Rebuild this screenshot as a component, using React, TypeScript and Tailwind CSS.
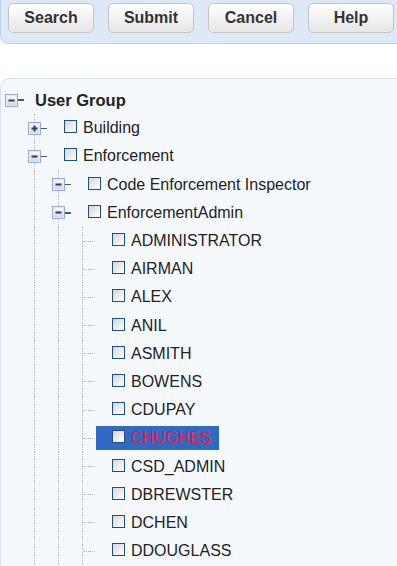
import React from "react";

type Kind = "root" | "open" | "closed" | "leaf";
type Node = { label: string; level: number; kind: Kind; selected?: boolean };

const nodes: Node[] = [
  { label: "User Group", level: 0, kind: "root" },
  { label: "Building", level: 1, kind: "closed" },
  { label: "Enforcement", level: 1, kind: "open" },
  { label: "Code Enforcement Inspector", level: 2, kind: "open" },
  { label: "EnforcementAdmin", level: 2, kind: "open" },
  { label: "ADMINISTRATOR", level: 3, kind: "leaf" },
  { label: "AIRMAN", level: 3, kind: "leaf" },
  { label: "ALEX", level: 3, kind: "leaf" },
  { label: "ANIL", level: 3, kind: "leaf" },
  { label: "ASMITH", level: 3, kind: "leaf" },
  { label: "BOWENS", level: 3, kind: "leaf" },
  { label: "CDUPAY", level: 3, kind: "leaf" },
  { label: "CHUGHES", level: 3, kind: "leaf", selected: true },
  { label: "CSD_ADMIN", level: 3, kind: "leaf" },
  { label: "DBREWSTER", level: 3, kind: "leaf" },
  { label: "DCHEN", level: 3, kind: "leaf" },
  { label: "DDOUGLASS", level: 3, kind: "leaf" },
];

function ExpanderBox({ plus }: { plus: boolean }) {
  return (
    <svg width="13" height="13" viewBox="0 0 13 13" className="block shrink-0">
      <defs>
        <linearGradient id={plus ? "gp" : "gm"} x1="0" y1="0" x2="0" y2="1">
          <stop offset="0" stopColor="#ffffff" />
          <stop offset="1" stopColor="#c6d4ea" />
        </linearGradient>
      </defs>
      <rect x="0.5" y="0.5" width="12" height="12" fill={`url(#${plus ? "gp" : "gm"})`} stroke="#93acd9" />
      <rect x="1.5" y="1.5" width="10" height="10" fill="none" stroke="#e3eaf6" />
      <rect x="3.5" y="5.5" width="6" height="2" fill="#3c3c3c" />
      {plus && <rect x="5.5" y="3.5" width="2" height="6" fill="#3c3c3c" />}
    </svg>
  );
}

function VLine() {
  return <div className="ml-[6px] h-full border-l border-dotted border-[#bdbdbd]" />;
}

function Checkbox() {
  return (
    <div className="mb-[3px] h-[13px] w-[13px] shrink-0 border border-[#1d4f80] bg-gradient-to-br from-[#d6d6d6] to-white" />
  );
}

function Row({ node }: { node: Node }) {
  const { level, kind } = node;
  return (
    <div className={`flex h-[28.2px] items-stretch ${kind === "root" ? "pl-[4px]" : "pl-[3px]"}`}>
      {Array.from({ length: level }).map((_, k) => (
        <div key={k} className="flex w-[24px] shrink-0">
          {k >= 1 && <VLine />}
        </div>
      ))}
      {kind === "leaf" ? (
        <>
          <div className="flex w-[13px] shrink-0 items-center">
            <div className="ml-[6px] self-stretch border-l border-dotted border-[#bdbdbd]" />
            <div className="flex-1 border-t border-dotted border-[#bdbdbd]" />
          </div>
          <div className="flex w-[6px] shrink-0 items-center">
            <div className="w-full border-t border-dotted border-[#bdbdbd]" />
          </div>
        </>
      ) : (
        <>
          <div className="flex w-[13px] shrink-0 flex-col">
            <div className="flex-1">{kind !== "root" && <VLine />}</div>
            <ExpanderBox plus={kind === "closed"} />
            <div className="flex-1">{kind !== "root" && <VLine />}</div>
          </div>
          <div className="flex w-[6px] shrink-0 items-center">
            <div className="h-[1.5px] w-full bg-[#555]" />
          </div>
        </>
      )}
      {kind === "root" ? (
        <div className="ml-[1px] flex items-center pl-[10px] text-[16.5px] font-bold text-[#222]">
          {node.label}
        </div>
      ) : (
        <div className="flex items-center">
          <div
            className={`ml-[1px] flex h-[24px] items-center gap-[6px] pl-[16px] pr-[8px] text-[16px] ${
              node.selected ? "bg-[#316ac5] text-[#f5163a]" : "text-[#222]"
            }`}
          >
            <Checkbox />
            <span className="whitespace-nowrap">{node.label}</span>
          </div>
        </div>
      )}
    </div>
  );
}

export default function App() {
  const buttons = ["Search", "Submit", "Cancel", "Help"];
  return (
    <div
      className="h-[566px] w-[397px] overflow-hidden bg-white"
      style={{ fontFamily: '"Liberation Sans", Arial, sans-serif' }}
    >
      <div className="flex h-[44px] gap-[14px] rounded-bl-[8px] border-b border-l border-[#bcd3ee] bg-[#dde9f6] pl-[7px] pt-[3px]">
        {buttons.map((b) => (
          <div
            key={b}
            className="flex h-[30px] w-[86px] shrink-0 items-center justify-center rounded-[5px] border border-[#c4c4c4] bg-gradient-to-b from-white to-[#e6e6e6] text-[16px] font-bold text-[#333]"
          >
            {b}
          </div>
        ))}
      </div>
      <div className="mt-[34px] h-[500px] rounded-tl-[10px] border-l border-t border-[#d2e2f4] bg-[#f5f9fe] pt-[7px]">
        {nodes.map((n) => (
          <Row key={n.label} node={n} />
        ))}
      </div>
    </div>
  );
}
